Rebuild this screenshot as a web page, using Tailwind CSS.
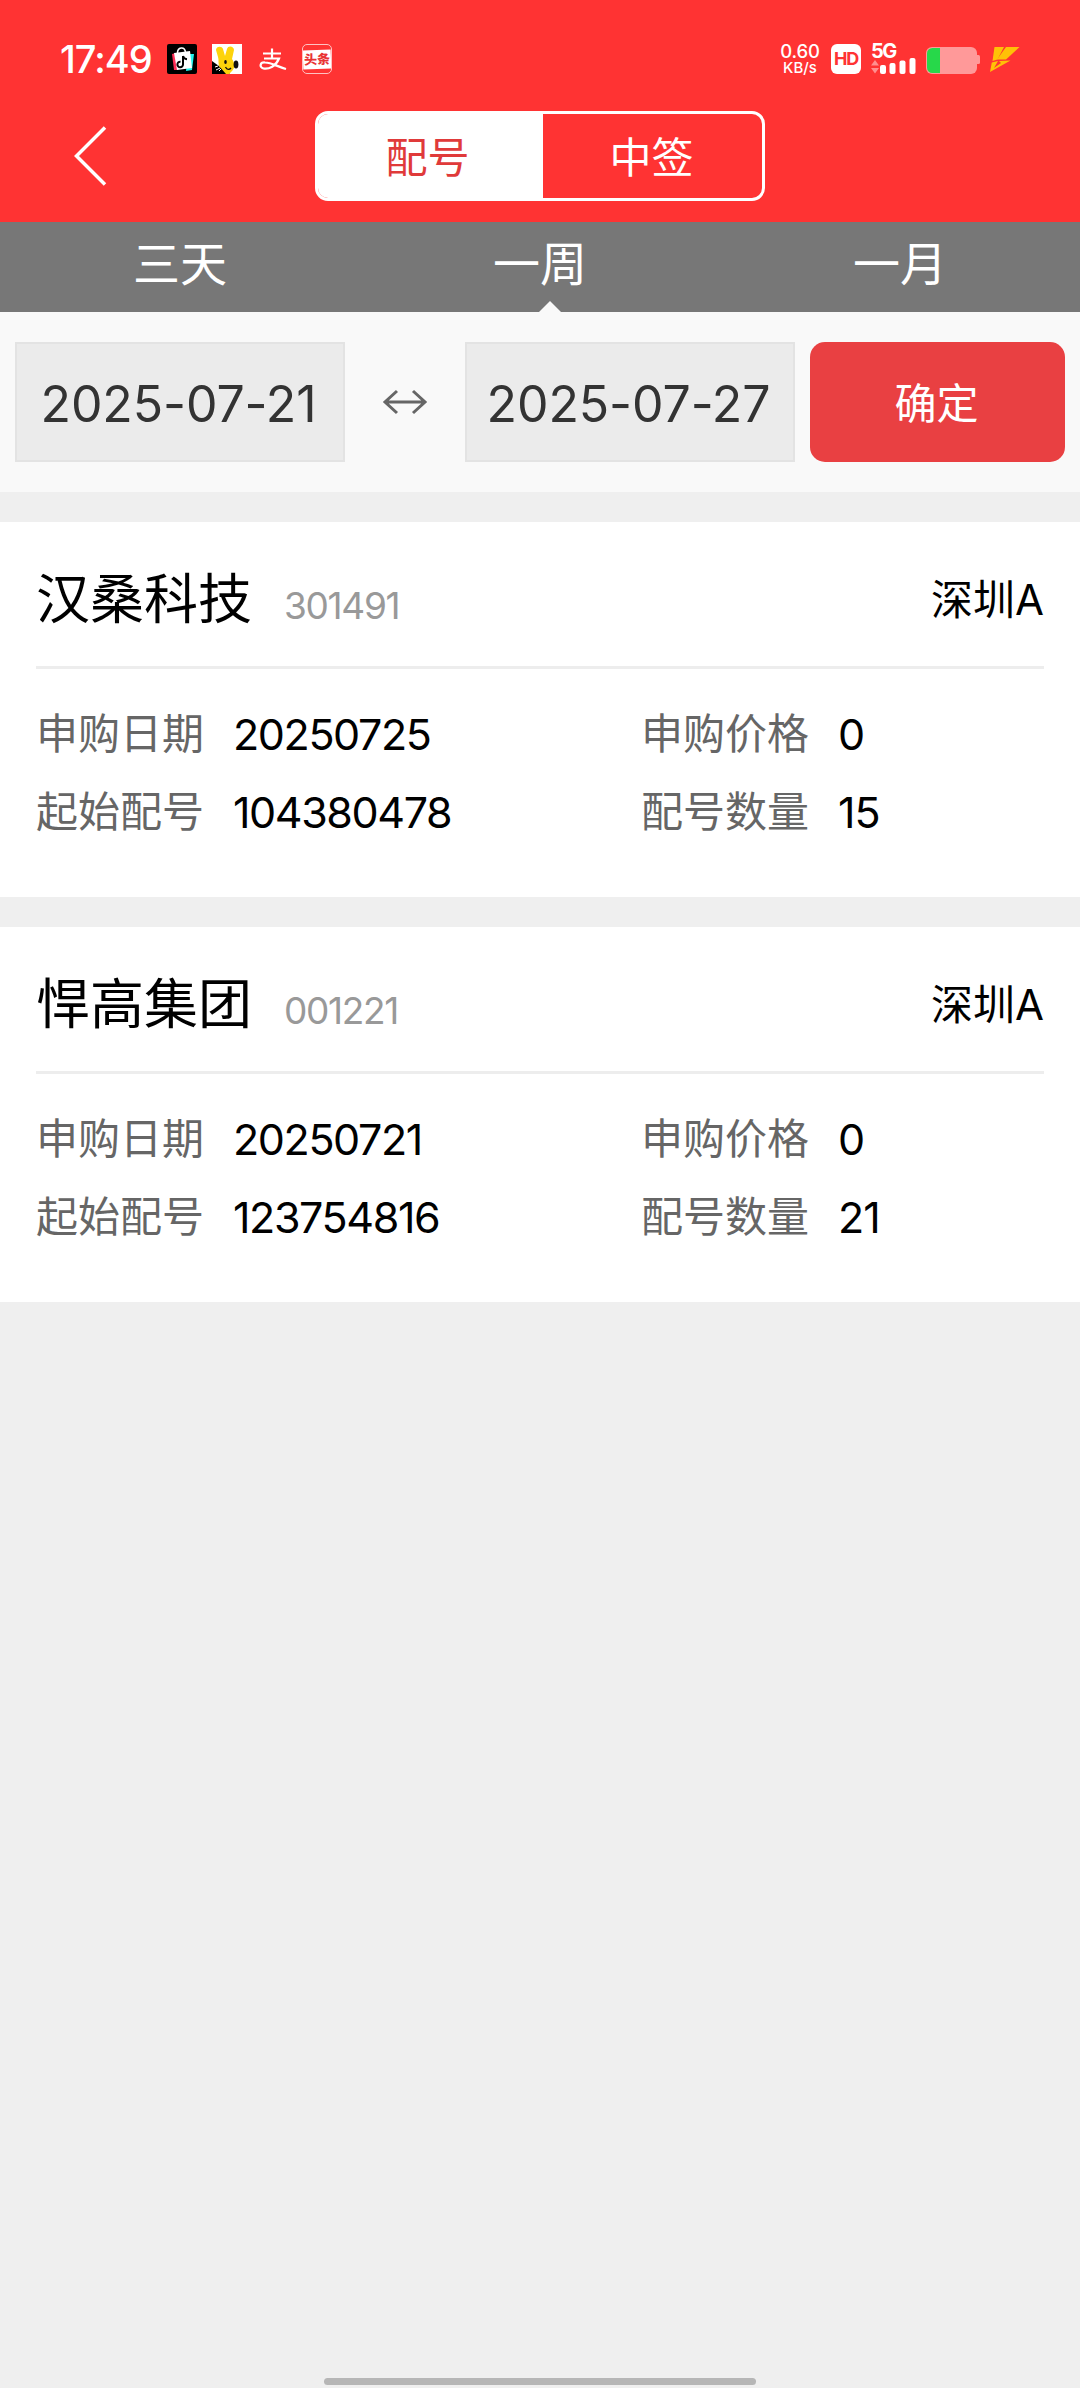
<!DOCTYPE html>
<html lang="zh-CN">
<head>
<meta charset="utf-8">
<title>配号查询</title>
<script src="https://cdn.jsdelivr.net/npm/@tailwindcss/browser@4"></script>
</head>
<body class="bg-[#efefef] font-['Inter','Noto_Sans_CJK_SC',sans-serif] text-black">
<div class="flex h-[2388px] w-[1080px] flex-col overflow-hidden">

  <!-- Status bar -->
  <header class="bg-[#ff3333] text-white">
    <div class="flex h-[90px] items-start justify-between pl-[60px] pr-[60px] pt-[44px]">
      <div class="flex h-[30px] items-center">
        <span class="w-[107px] whitespace-nowrap text-[38px] font-medium leading-[30px] tracking-[-1px]">17:49</span>
        <svg class="mr-[15px] size-[30px]" viewBox="0 0 30 30">
          <rect width="30" height="30" rx="2" fill="#000"/>
          <path d="M5 10l4-1 2 17-4 0z" fill="#fe2c55"/><path d="M21 10l6 0-2 16-6 1z" fill="#25f4ee"/>
          <path d="M7 9l16-2 2 17-15 2z" fill="#fff"/>
          <path d="M10.500 9c0-6 7-7 8-1" fill="none" stroke="#fff" stroke-width="1.600"/>
          <path d="M16 12v8.500a2.800 2.800 0 1 1-2.500-2.800M16 12c.5 2.400 2 3 4 3.200" fill="none" stroke="#000" stroke-width="2"/>
        </svg>
        <svg class="mr-[17px] size-[30px]" viewBox="0 0 30 30">
          <rect width="30" height="30" fill="#fff"/>
          <path d="M0 17L18 30H0z" fill="#000"/>
          <path d="M4 6c0-4 6-4.500 7-1l2 7 2-7c1-4 7-3 7 1l-2 9c3 4 3 9 0 12l-3 3h-3L7 22c-1-4 0-6-1-9z" fill="#fdd30b"/>
          <ellipse cx="24" cy="20.500" rx="2.400" ry="4" fill="#111"/><ellipse cx="13.500" cy="18" rx="1.300" ry="2" fill="#111"/>
          <path d="M13.500 23c1.500 3 4 3 5.500 1" fill="none" stroke="#111" stroke-width="1.300"/>
          <path d="M3 23l3-1M4 26l4-2M7 27l2-2" stroke="#fff" stroke-width="1"/>
        </svg>
        <svg class="mr-[15px] h-[30px] w-[28px]" viewBox="0 0 28 30" fill="none" stroke="#fff">
          <path d="M4 9.500h18M13 4.500v9.500" stroke-width="2.200"/>
          <path d="M5 14.500h15C17 22 10 25.500 4.500 24.500c-4.500-1.500-3.500-6.500 1.500-6C12.500 18.500 18 22.500 27 25" stroke-width="2.200"/>
        </svg>
        <div class="flex size-[30px] flex-col justify-center overflow-hidden rounded-[5px] border border-[#ffc2c2]">
          <span class="block -rotate-2 whitespace-nowrap bg-white text-center text-[13px] font-black leading-[19px] text-[#e93434]">头条</span>
        </div>
      </div>

      <div class="flex h-[30px] items-center">
        <div class="mr-[12px] flex w-[38px] flex-col items-center whitespace-nowrap font-medium">
          <span class="text-[18.500px] leading-[17px] tracking-[-0.200px]">0.60</span>
          <span class="text-[15px] leading-[15px]">KB/s</span>
        </div>
        <div class="mr-[10px] flex size-[30px] items-center justify-center rounded-[6px] bg-white text-[18px] font-bold leading-none tracking-[-1.200px] text-[#ff3333]">HD</div>
        <div class="mr-[10px] flex h-[30px] w-[45px] flex-col justify-between">
          <span class="text-[20px] font-bold leading-[15px] tracking-[-1.500px]">5G</span>
          <svg class="-mt-[1px] h-[16px] w-[45px] shrink-0" viewBox="0 0 45 16" fill="#fff">
            <path d="M0 7.500L4 2l4 5.500zM0 10h8l-4 5.500z" fill="#ff8f8f"/>
            <rect x="9" y="7" width="6" height="9" rx="2"/><rect x="18.500" y="5" width="6" height="11" rx="2"/><rect x="28.500" y="2.500" width="6" height="13.500" rx="2"/><rect x="38.500" y="0" width="6" height="16" rx="2"/>
          </svg>
        </div>
        <svg class="mr-[9px] h-[30px] w-[54px]" viewBox="0 0 54 30">
          <rect x="0" y="3" width="51" height="27" rx="6" fill="#ff9999"/><path d="M51 11h1.500a1.500 1.500 0 0 1 1.500 1.500v6a1.500 1.500 0 0 1-1.500 1.500H51z" fill="#ff9999"/>
          <path d="M14 4H6.500A5.500 5.500 0 0 0 1 9.500v14A5.500 5.500 0 0 0 6.500 29H14z" fill="#27d84a"/>
        </svg>
        <svg class="h-[30px] w-[31px]" viewBox="0 0 31 30" fill="#ffc107">
          <path d="M5.500 3H15L8.500 15.500 3.500 17z"/>
          <path d="M17 3h13.500L17 15.500h-9z"/>
          <path d="M10 17l11.500-.500L1 28 2.800 18.500 9 17l-4 7 7-5z"/>
        </svg>
      </div>
    </div>

    <!-- Navigation -->
    <nav class="grid h-[132px] grid-cols-[315px_450px_315px] items-center">
      <button class="flex items-center pl-[71px]" aria-label="返回">
        <svg class="h-[66px] w-[40px]" viewBox="0 0 40 66" fill="none" stroke="#fff" stroke-width="3.500"><path d="M34 4.500L5.500 33 34 61.500"/></svg>
      </button>
      <div class="flex h-[90px] overflow-hidden rounded-[13px] border-3 border-white text-[42px] leading-[60px]">
        <div class="flex w-[225px] items-center justify-center bg-white pr-[6px] pt-[4px] text-[#e03a3a]">配号</div>
        <div class="flex flex-1 items-center justify-center pr-[2px] pt-[4px]">中签</div>
      </div>
    </nav>
  </header>

  <!-- Range tabs -->
  <div class="relative grid h-[90px] grid-cols-3 bg-[#777777] text-center text-[47px] leading-[84px] text-white">
    <span>三天</span><span>一周</span><span>一月</span>
    <svg class="absolute bottom-0 left-[539px] h-[11px] w-[22px]" viewBox="0 0 22 11"><path d="M11 0L22 11H0z" fill="#f9f9f9"/></svg>
  </div>

  <!-- Date filter -->
  <div class="flex h-[180px] items-center bg-[#f9f9f9] px-[15px] text-[50px] tracking-[-0.100px] text-[#333]">
    <div class="flex h-[120px] w-[330px] items-center justify-center whitespace-nowrap border-2 border-[#e3e3e3] bg-[#ebebeb] pt-[5px] pr-[3px]">2025-07-21</div>
    <div class="flex w-[120px] justify-center">
      <svg class="h-[26px] w-[46px]" viewBox="0 0 46 26" fill="none" stroke="#666" stroke-width="3"><path d="M3 13h40M15 2L3 13l12 11M31 2l12 11-12 11"/></svg>
    </div>
    <div class="flex h-[120px] w-[330px] items-center justify-center whitespace-nowrap border-2 border-[#e3e3e3] bg-[#ebebeb] pt-[5px] pr-[3px]">2025-07-27</div>
    <button class="ml-[15px] h-[120px] w-[255px] rounded-[15px] bg-[#e94042] pr-[2px] pt-[2px] text-[42px] text-white">确定</button>
  </div>

  <!-- Allotment list -->
  <main class="flex flex-col gap-[30px] pt-[30px]">
    <section class="h-[375px] bg-white px-[36px]">
      <div class="flex h-[147px] items-baseline border-b-3 border-[#ededed] pt-[38px] leading-[80px]">
        <h2 class="w-[248px] whitespace-nowrap text-[54px]">汉桑科技</h2>
        <span class="text-[37px] tracking-[-1.300px] text-[#999]">301491</span>
        <span class="mb-[23px] ml-auto self-end text-[42px] leading-[86px]">深圳A</span>
      </div>
      <div class="grid grid-cols-[605px_1fr] pt-[26px] text-[42px] leading-[78px]">
        <div class="flex"><span class="w-[197px] text-[#666]">申购日期</span><span class="text-[43px] tracking-[-1.400px]">20250725</span></div>
        <div class="flex"><span class="w-[197px] text-[#666]">申购价格</span><span class="text-[43px] tracking-[-1.400px]">0</span></div>
        <div class="flex"><span class="w-[197px] text-[#666]">起始配号</span><span class="text-[43px] tracking-[-1.400px]">104380478</span></div>
        <div class="flex"><span class="w-[197px] text-[#666]">配号数量</span><span class="text-[43px] tracking-[-1px]">15</span></div>
      </div>
    </section>
    <section class="h-[375px] bg-white px-[36px]">
      <div class="flex h-[147px] items-baseline border-b-3 border-[#ededed] pt-[38px] leading-[80px]">
        <h2 class="w-[248px] whitespace-nowrap text-[54px]">悍高集团</h2>
        <span class="text-[37px] tracking-[-1.300px] text-[#999]">001221</span>
        <span class="mb-[23px] ml-auto self-end text-[42px] leading-[86px]">深圳A</span>
      </div>
      <div class="grid grid-cols-[605px_1fr] pt-[26px] text-[42px] leading-[78px]">
        <div class="flex"><span class="w-[197px] text-[#666]">申购日期</span><span class="text-[43px] tracking-[-1.400px]">20250721</span></div>
        <div class="flex"><span class="w-[197px] text-[#666]">申购价格</span><span class="text-[43px] tracking-[-1.400px]">0</span></div>
        <div class="flex"><span class="w-[197px] text-[#666]">起始配号</span><span class="text-[43px] tracking-[-1.400px]">123754816</span></div>
        <div class="flex"><span class="w-[197px] text-[#666]">配号数量</span><span class="text-[43px] tracking-[-1px]">21</span></div>
      </div>
    </section>
  </main>

  <!-- Gesture bar -->
  <div class="mx-auto mb-[3px] mt-auto h-[7px] w-[432px] shrink-0 rounded-full bg-[#b6b6b6]"></div>
</div>
</body>
</html>
